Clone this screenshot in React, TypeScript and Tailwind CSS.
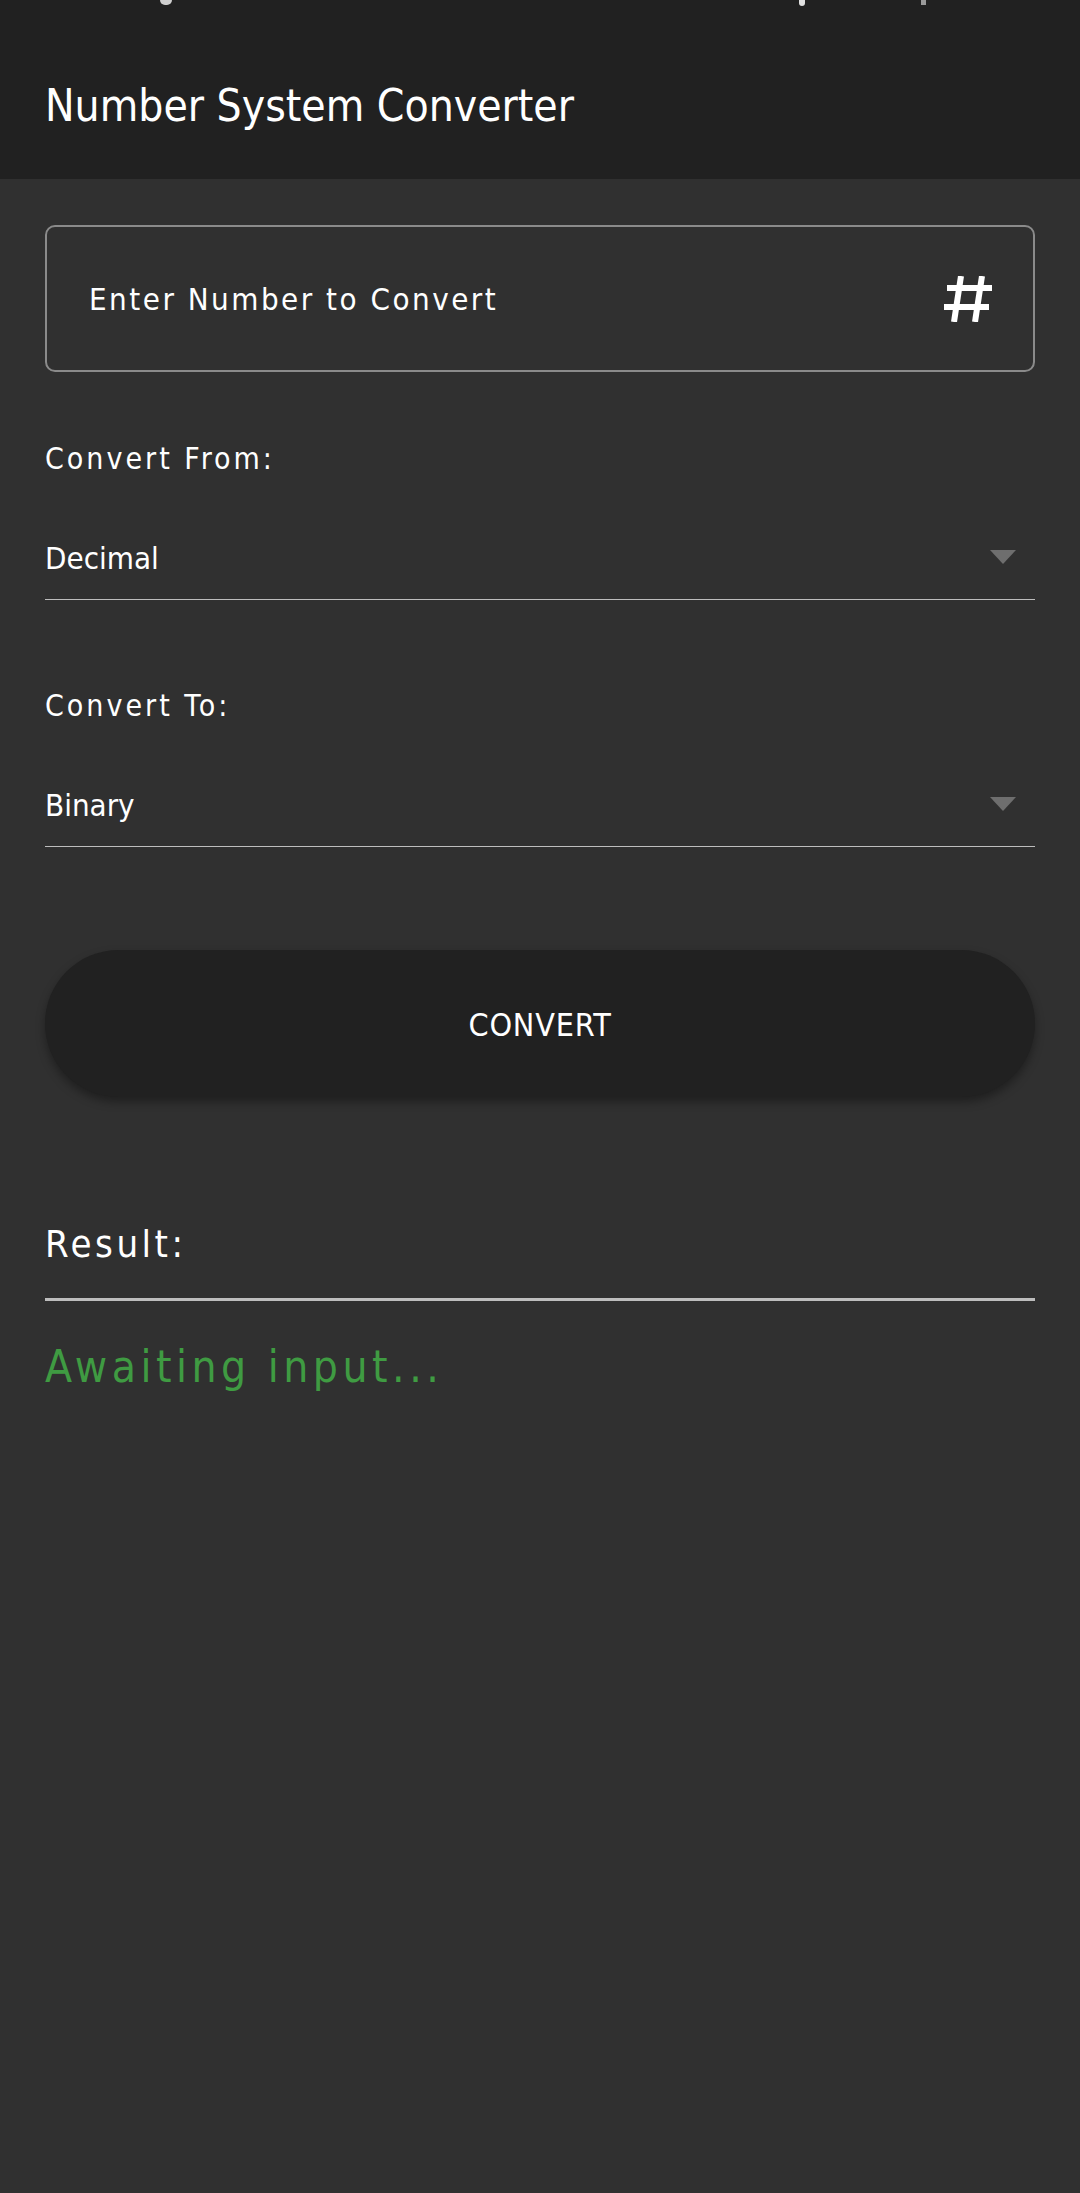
// Number system converter screen
import { useState } from 'react';

const FONT = "font-['DejaVu_Sans_Condensed','DejaVu_Sans',sans-serif] font-stretch-condensed";

function HashIcon() {
  return (
    <svg width="48" height="46" viewBox="0 0 48 46" fill="none" stroke="white" strokeWidth="6" strokeLinecap="butt">
      <line x1="17" y1="0" x2="10" y2="46" />
      <line x1="38" y1="0" x2="31" y2="46" />
      <line x1="3" y1="12" x2="48" y2="12" />
      <line x1="0" y1="31" x2="45" y2="31" />
    </svg>
  );
}

function Dropdown({ value }: { value: string }) {
  return (
    <div className="flex h-[121px] items-end justify-between border-b border-[#bdbdbd] pb-[21px] pr-[19px]">
      <span className="text-[31px] leading-[40px] text-white">{value}</span>
      <svg width="26" height="14" viewBox="0 0 26 14" className="mb-[14px]">
        <polygon points="0,0 26,0 13,14" fill="#6e6e6e" />
      </svg>
    </div>
  );
}

export default function App() {
  const [result] = useState('Awaiting input...');

  return (
    <div className={`relative min-h-[2193px] w-full bg-[#303030] ${FONT}`}>
      {/* status bar icons, cut off at the top edge */}
      <div className="absolute left-[160px] top-0 h-[5px] w-[12px] rounded-b-full bg-[#cfcfcf]" />
      <div className="absolute left-[799px] top-0 h-[6px] w-[6px] rounded-b-full bg-[#e0e0e0]" />
      <div className="absolute left-[921px] top-0 h-[5px] w-[5px] bg-[#9a9a9a]" />

      <div className="h-[179px] bg-[#212121] px-[45px] pt-[32px]">
        <div className="flex h-[147px] items-center">
          <h1 className="text-[44px] leading-[50px] text-white">Number System Converter</h1>
        </div>
      </div>

      <div className="px-[45px]">
        <div className="mt-[46px] flex h-[147px] items-center justify-between rounded-[10px] border-2 border-[#8a8a8a] pl-[42px] pr-[41px]">
          <span className="text-[31px] leading-[40px] tracking-[2.5px] text-white">Enter Number to Convert</span>
          <HashIcon />
        </div>

        <div className="mt-[67px] text-[30px] leading-[40px] tracking-[3px] text-white">Convert From:</div>
        <Dropdown value="Decimal" />

        <div className="mt-[86px] text-[30px] leading-[40px] tracking-[3px] text-white">Convert To:</div>
        <Dropdown value="Binary" />

        <button className="mt-[103px] flex h-[147px] w-full items-center justify-center rounded-full bg-[#212121] pt-[3px] text-[32px] tracking-wide text-white shadow-[0_5px_10px_rgba(0,0,0,0.35)]">
          CONVERT
        </button>

        <div className="mt-[122px] text-[38px] leading-[50px] tracking-[3.5px] text-white">Result:</div>
        <div className="mt-[29px] h-[3px] bg-[#bdbdbd]" />
        <div className="mt-[36px] text-[44px] leading-[60px] tracking-[4.5px] text-[#3f9b42]">{result}</div>
      </div>
    </div>
  );
}
